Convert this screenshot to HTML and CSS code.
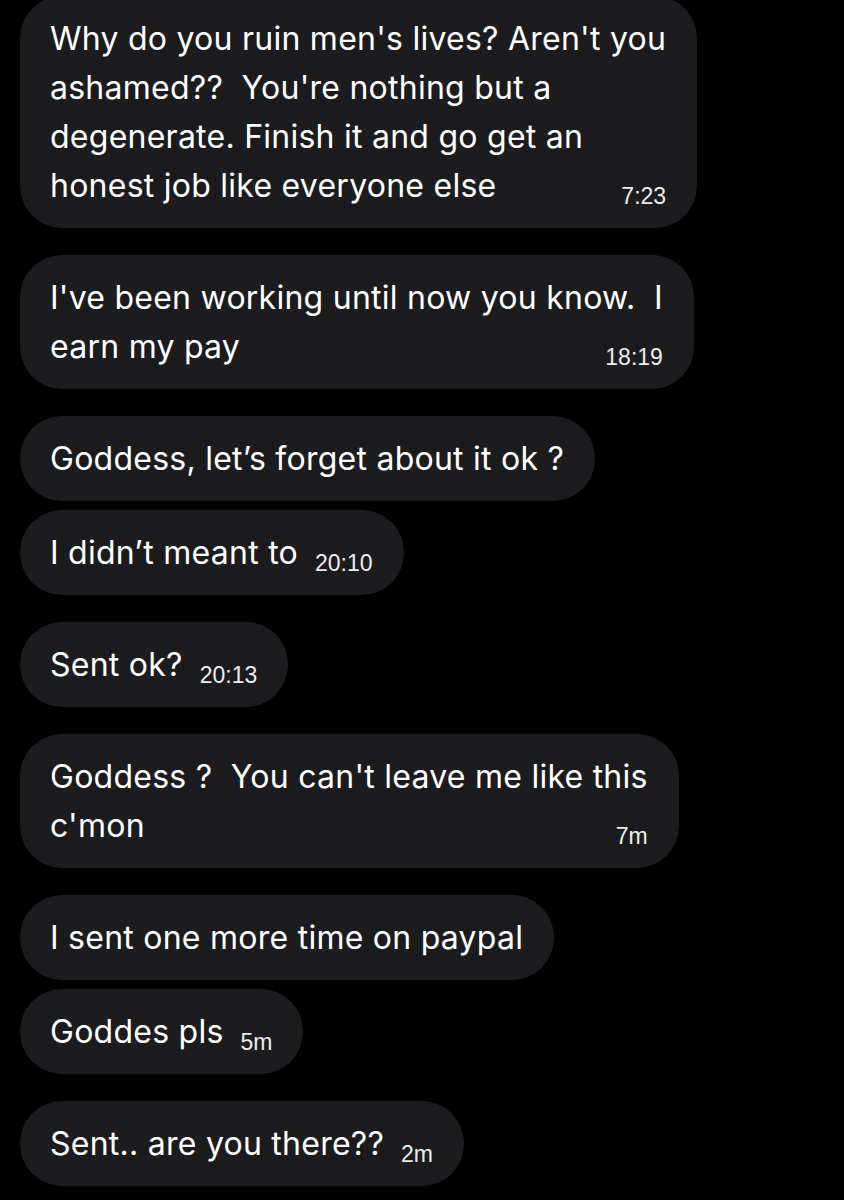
FILE: index.html
```html
<!DOCTYPE html>
<html lang="en">
  <head>
    <meta charset="UTF-8" />
    <title>Messages</title>
    <link rel="stylesheet" href="styles.css">
  </head>
  <body>
    <div class="thread">
      <div class="group first">
        <div class="bubble multi">
          <div class="line">Why do you ruin men's lives? Aren't you</div>
          <div class="line">ashamed??&nbsp; You're nothing but a</div>
          <div class="line">degenerate. Finish it and go get an</div>
          <div class="row">
            <span>honest job like everyone else</span>
            <span class="time">7:23</span>
          </div>
        </div>
      </div>

      <div class="group">
        <div class="bubble multi">
          <div class="line">I've been working until now you know.&nbsp; I</div>
          <div class="row">
            <span>earn my pay</span>
            <span class="time">18:19</span>
          </div>
        </div>
      </div>

      <div class="group">
        <div class="bubble">
          <div class="row">
            <span>Goddess, let’s forget about it ok ?</span>
          </div>
        </div>
        <div class="bubble">
          <div class="row">
            <span>I didn’t meant to</span>
            <span class="time">20:10</span>
          </div>
        </div>
      </div>

      <div class="group">
        <div class="bubble">
          <div class="row">
            <span>Sent ok?</span>
            <span class="time">20:13</span>
          </div>
        </div>
      </div>

      <div class="group">
        <div class="bubble multi">
          <div class="line">Goddess ?&nbsp; You can't leave me like this</div>
          <div class="row">
            <span>c'mon</span>
            <span class="time">7m</span>
          </div>
        </div>
      </div>

      <div class="group">
        <div class="bubble">
          <div class="row">
            <span>I sent one more time on paypal</span>
          </div>
        </div>
        <div class="bubble">
          <div class="row">
            <span>Goddes pls</span>
            <span class="time">5m</span>
          </div>
        </div>
      </div>

      <div class="group">
        <div class="bubble">
          <div class="row">
            <span>Sent.. are you there??</span>
            <span class="time">2m</span>
          </div>
        </div>
      </div>
    </div>
  </body>
</html>
```

FILE: styles.css
```css
html,
body {
  background: #000;
}

body {
  margin: 0;
  padding: 0;
  font-family: Inter, "Noto Sans", sans-serif;
  color: #fff;
}

.thread {
  display: flex;
  flex-direction: column;
  gap: 27px;
  padding: 0 20px;
}

.group {
  display: flex;
  flex-direction: column;
  align-items: flex-start;
  gap: 9px;
}

.group.first {
  margin-top: -4px;
}

.bubble {
  background: #1c1c1e;
  border-radius: 42px;
  padding: 18px 31px 18px 30px;
  font-size: 32px;
  line-height: 49px;
  letter-spacing: 0.25px;
  white-space: nowrap;
}

.bubble.multi {
  padding-right: 31px;
}

.row {
  display: flex;
  justify-content: space-between;
  align-items: flex-end;
  gap: 17px;
}

.time {
  font-family: "Liberation Sans", Arial, sans-serif;
  font-size: 23px;
  line-height: 23px;
  letter-spacing: 0;
  margin-bottom: 2px;
  color: #ededed;
}
```
